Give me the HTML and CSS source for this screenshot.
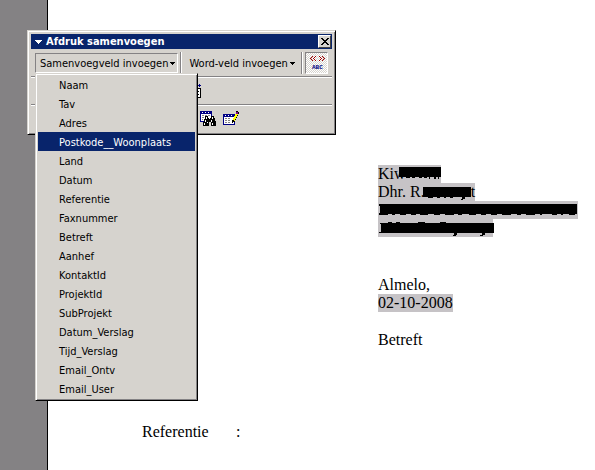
FILE: index.html
```html
<!DOCTYPE html>
<html lang="nl">

<head>
    <meta charset="UTF-8">
    <meta name="viewport" content="width=device-width, initial-scale=1.0">
    <title>Afdruk samenvoegen</title>
    <link rel="stylesheet" href="styles.css">
</head>

<body>
    <main class="page">
        <div class="address">
            <p><span class="field">Kiw<svg class="redacted" width="35" height="18" viewBox="0 0 35 18"><path d="M-7 2h42v10h-42zM-5 12h1v1h-1zM0 12h4v1h-4zM6 12h3v1h-3zM13 12h3v1h-3zM18 12h3v1h-3zM23 12h1v2h-1zM28 12h2v2h-2zM32 12h1v2h-1z"/></svg></span></p>
            <p><span class="field">Dhr. R.<svg class="redacted" width="46" height="18" viewBox="0 0 46 18"><path d="M-2 4h48v10h-48zM3 14h5v1h-5zM12 14h3v1h-3zM19 14h2v1h-2zM25 14h3v1h-3zM37 14h3v2h-3zM36 16h2v1h-2z"/></svg>t</span></p>
            <p><span class="field"><svg class="redacted" width="200" height="18" viewBox="0 0 200 18"><path d="M2 3h197v10h-197zM1 3h5v2h-5zM1 12h9v2h-9zM14 13h3v1h-3zM22 13h6v1h-6zM33 13h5v1h-5zM42 13h8v1h-8zM56 13h6v1h-6zM67 13h9v1h-9zM80 13h4v1h-4zM91 13h7v1h-7zM103 13h5v1h-5zM113 13h6v1h-6zM124 13h9v1h-9zM139 13h4v1h-4zM148 13h9v1h-9zM162 13h2v1h-2zM174 13h5v1h-5zM183 13h2v1h-2zM191 13h6v1h-6z"/></svg></span></p>
            <p><span class="field"><svg class="redacted" width="115" height="18" viewBox="0 0 115 18"><path d="M3 4h113v10h-113zM2 4h4v1h-4zM1 13h6v1h-6zM10 3h4v1h-4zM18 3h4v1h-4zM40 3h7v1h-7zM62 3h6v1h-6zM76 14h3v2h-3zM75 16h3v1h-3zM104 14h3v2h-3zM102 16h3v1h-3z"/></svg></span></p>
        </div>
        <div class="letter-date">
            <p>Almelo,</p>
            <p><span class="field">02-10-2008</span></p>
        </div>
        <p class="subject">Betreft</p>
        <p class="reference"><span class="reference-label">Referentie</span><span>:</span></p>
    </main>

    <div class="toolbar">
        <div class="title-bar">
            <svg class="arrow" width="7" height="4" viewBox="0 0 7 4"><path d="M0 0h7v1h-1v1h-1v1h-1v1h-1v-1h-1v-1h-1v-1h-1z"/></svg>
            <h1>Afdruk samenvoegen</h1>
            <button type="button" class="close" aria-label="Sluiten">
                <svg width="8" height="7" viewBox="0 0 8 7"><path d="M0 0h2v1h1v1h2v-1h1v-1h2v1h-1v1h-1v1h-1v1h1v1h1v1h1v1h-2v-1h-1v-1h-2v1h-1v1h-2v-1h1v-1h1v-1h1v-1h-1v-1h-1v-1h-1z"/></svg>
            </button>
        </div>

        <div class="row row-fields">
            <button type="button" class="drop open" aria-expanded="true">Samenvoegveld invoegen
                <svg width="5" height="3" viewBox="0 0 5 3"><path d="M0 0h5v1h-1v1h-1v1h-1v-1h-1v-1h-1z"/></svg>
            </button>
            <span class="divider"></span>
            <button type="button" class="drop">Word-veld invoegen
                <svg width="5" height="3" viewBox="0 0 5 3"><path d="M0 0h5v1h-1v1h-1v1h-1v-1h-1v-1h-1z"/></svg>
            </button>
            <span class="divider last"></span>
            <button type="button" class="toggle" aria-label="Samengevoegde gegevens weergeven" aria-pressed="true">
                <svg width="18" height="16" viewBox="0 0 18 16">
                    <path class="chevrons" d="M4 1h1v1h-1v1h-1v1h1v1h1v1h-1v-1h-1v-1h-1v-1h1v-1h1zM7 1h1v1h-1v1h-1v1h1v1h1v1h-1v-1h-1v-1h-1v-1h1v-1h1zM11 1h1v1h1v1h1v1h-1v1h-1v1h-1v-1h1v-1h1v-1h-1v-1h-1zM14 1h1v1h1v1h1v1h-1v1h-1v1h-1v-1h1v-1h1v-1h-1v-1h-1z"/>
                    <text x="4" y="14">ABC</text>
                </svg>
            </button>
        </div>

        <div class="row row-records">
            <button type="button" class="tool" aria-label="Record">
                <svg width="16" height="16" viewBox="0 0 16 16">
                    <path d="M6 5h8v10h-8z"/>
                    <path fill="#fff" d="M7 6h6v8h-6z"/>
                    <path d="M10 8h2v1h-2zM10 11h2v1h-2z"/>
                    <path fill="#000084" d="M11 2h3v1h-3zM12 1h1v3h-1z"/>
                </svg>
            </button>
        </div>

        <div class="row row-search">
            <button type="button" class="tool" aria-label="Item zoeken">
                <svg width="16" height="16" viewBox="0 0 16 16">
                    <path fill="#000084" d="M0 0h12v11h-12z"/>
                    <path fill="#fff" d="M1 3h10v7h-10zM2 1h1v1h-1zM5 1h1v1h-1zM8 1h1v1h-1z"/>
                    <path fill="#848284" d="M2 4h2v1h-2zM5 4h2v1h-2zM8 4h2v1h-2zM2 6h2v1h-2zM2 8h1v1h-1z"/>
                    <path d="M5 5h3v2h1v1h1v-1h1v-2h3v2h1v3h1v5h-5v-4h-2v4h-6v-4h1v-3h1z"/>
                    <path fill="#fff" d="M6 6h1v2h-1zM5 9h1v2h-1zM4 12h1v2h-1zM12 6h1v2h-1zM11 9h1v2h-1zM12 12h1v2h-1zM7 11h1v1h-1z"/>
                </svg>
            </button>
            <button type="button" class="tool" aria-label="Gegevensbron bewerken">
                <svg width="16" height="16" viewBox="0 0 16 16">
                    <path fill="#000084" d="M0 3h12v11h-12z"/>
                    <path fill="#fff" d="M1 6h10v7h-10zM2 4h1v1h-1zM5 4h1v1h-1zM8 4h1v1h-1z"/>
                    <path fill="#848284" d="M2 7h2v1h-2zM5 7h2v1h-2zM2 9h2v1h-2zM5 9h2v1h-2zM2 11h2v1h-2zM5 11h2v1h-2z"/>
                    <path d="M13 0h2v1h1v2h-1v2h-1v2h-1v2h-1v2h-2v1h-1v-3h1v-2h1v-2h1v-2h1z"/>
                    <path fill="#ff0" d="M12 3h3v1h-1v2h-1v2h-1v2h-1v-1h-1v-2h1v-2h1z"/>
                    <path fill="#840084" d="M13 1h2v2h-2z"/>
                </svg>
            </button>
        </div>

        <div class="menu" role="menu">
            <button type="button" role="menuitem">Naam</button>
            <button type="button" role="menuitem">Tav</button>
            <button type="button" role="menuitem">Adres</button>
            <button type="button" role="menuitem" class="selected">Postkode__Woonplaats</button>
            <button type="button" role="menuitem">Land</button>
            <button type="button" role="menuitem">Datum</button>
            <button type="button" role="menuitem">Referentie</button>
            <button type="button" role="menuitem">Faxnummer</button>
            <button type="button" role="menuitem">Betreft</button>
            <button type="button" role="menuitem">Aanhef</button>
            <button type="button" role="menuitem">KontaktId</button>
            <button type="button" role="menuitem">ProjektId</button>
            <button type="button" role="menuitem">SubProjekt</button>
            <button type="button" role="menuitem">Datum_Verslag</button>
            <button type="button" role="menuitem">Tijd_Verslag</button>
            <button type="button" role="menuitem">Email_Ontv</button>
            <button type="button" role="menuitem">Email_User</button>
        </div>
    </div>
</body>

</html>
```

FILE: styles.css
```css
* {
    box-sizing: border-box;
}

body {
    margin: 0;
    padding-left: 47px;
    background: #848284;
    color: #000;
    font-family: Tahoma, "DejaVu Sans Condensed", "DejaVu Sans", sans-serif;
    font-size: 11px;
}

/* document */

.page {
    min-height: 100vh;
    padding: 165px 16px 0 94px;
    border-left: 1px solid #000;
    background: #fff;
    font-family: "Liberation Serif", "Times New Roman", serif;
    font-size: 16px;
    line-height: 18px;
}

.page p {
    margin: 0;
}

.address,
.letter-date,
.subject {
    padding-left: 236px;
}

.letter-date {
    margin-top: 39px;
}

.page .subject {
    margin-top: 19px;
}

.page .reference {
    display: flex;
    margin-top: 74px;
}

.reference-label {
    width: 94px;
}

.field {
    display: inline-flex;
    height: 18px;
    background: #c6c3c6;
    vertical-align: top;
}

.redacted {
    overflow: visible;
}

/* toolbar */

svg {
    display: block;
    flex: none;
    shape-rendering: crispEdges;
}

button {
    padding: 0;
    border: 0;
    background: none;
    color: inherit;
    font: inherit;
}

.toolbar {
    position: absolute;
    top: 30px;
    left: 27px;
    width: 309px;
    padding: 2px;
    border: 1px solid;
    border-color: #d6d3ce #000 #000 #d6d3ce;
    background: #d6d3ce;
    box-shadow: inset 1px 1px #fff, inset -1px -1px #848284;
}

.title-bar {
    display: flex;
    align-items: center;
    height: 17px;
    padding: 0 1px 0 4px;
    border: 1px solid #d6d3ce;
    background: #08246b;
    color: #fff;
}

.title-bar .arrow {
    fill: #fff;
}

.title-bar h1 {
    flex: 1;
    margin: 0 0 0 4px;
    font-size: 11px;
    line-height: 15px;
}

.close {
    display: flex;
    align-items: center;
    justify-content: center;
    width: 13px;
    height: 13px;
    border: 1px solid;
    border-color: #fff #424142 #424142 #fff;
    background: #d6d3ce;
}

.row {
    display: flex;
    align-items: center;
    height: 28px;
    margin: 0 1px;
    border-top: 1px solid #848284;
    box-shadow: inset 0 1px #fff;
}

.row-fields {
    height: 26px;
    padding: 0 4px;
    border-top: 0;
    box-shadow: none;
}

.row-records {
    padding-left: 152px;
}

.row-search {
    padding-left: 165px;
}

.drop {
    display: flex;
    align-items: center;
    gap: 2px;
    height: 20px;
    padding: 0 2px 0 4px;
    border: 1px solid transparent;
    white-space: nowrap;
}

.drop.open {
    border-color: #848284 #fff #fff #848284;
}

.divider {
    width: 2px;
    height: 22px;
    margin: 0 2px;
    border-left: 1px solid #848284;
    border-right: 1px solid #fff;
}

.divider.last {
    margin-left: auto;
}

.toggle {
    display: flex;
    align-items: center;
    justify-content: center;
    width: 23px;
    height: 22px;
    border: 1px solid;
    border-color: #848284 #fff #fff #848284;
    background: repeating-conic-gradient(#fff 0 25%, #d6d3ce 0 50%) 0 0 / 2px 2px;
}

.toggle text {
    fill: #000084;
    font: bold 6px "Liberation Mono", monospace;
}

.chevrons {
    fill: #a00000;
}

.tool {
    display: flex;
    align-items: center;
    justify-content: center;
    width: 23px;
    height: 22px;
}

/* menu */

.menu {
    position: absolute;
    top: 42px;
    left: 7px;
    width: 163px;
    padding: 1px 1px 2px;
    border: 1px solid;
    border-color: #d6d3ce #000 #000 #d6d3ce;
    background: #d6d3ce;
    box-shadow: inset 1px 1px #fff, inset -1px -1px #848284;
}

.menu button {
    display: block;
    width: 157px;
    height: 19px;
    margin-left: 1px;
    padding: 1px 0 0 21px;
    line-height: 19px;
    text-align: left;
}

.menu .selected {
    background: #08246b;
    color: #fff;
}
```
